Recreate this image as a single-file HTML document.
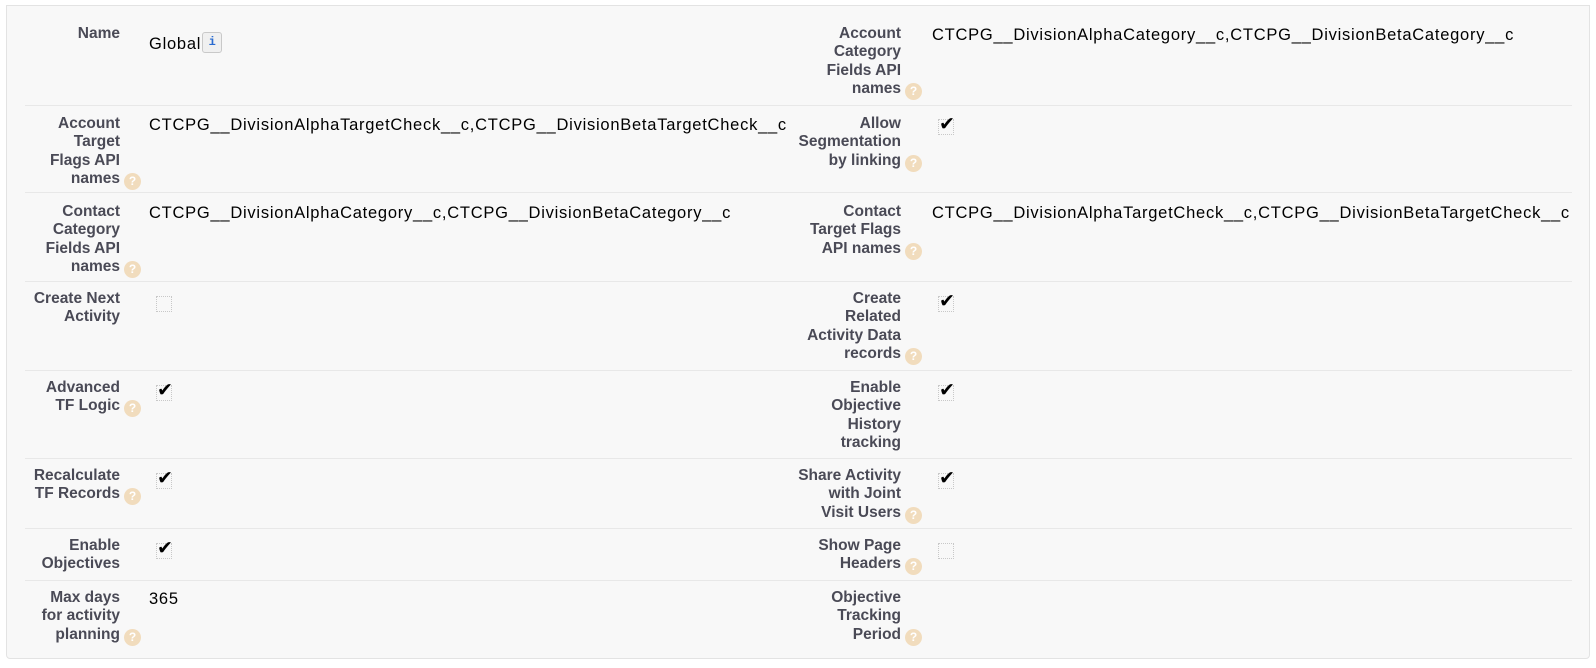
<!DOCTYPE html>
<html><head><meta charset="utf-8"><style>
html,body{margin:0;padding:0;background:#fff;width:1596px;height:668px;overflow:hidden;font-family:"Liberation Sans",Arial,sans-serif;}
.panel{position:absolute;left:6px;top:5px;width:1584px;height:654px;background:#f8f8f8;border:1px solid #e3e3e3;border-radius:0 0 4px 4px;box-sizing:border-box;}
.sep{position:absolute;left:25px;width:1547px;height:1px;background:#e8e8e8;}
.lab{position:absolute;font-weight:bold;font-size:15.5px;line-height:18.3px;color:#4a4a56;text-align:right;}
.l{right:1476px;width:90px;}
.r{right:695px;width:107px;}
.val{position:absolute;font-size:16.5px;line-height:18.3px;color:#000;white-space:nowrap;letter-spacing:0.75px;}
.vl{left:149px}.vr{left:932px}
.h{display:inline-block;width:17px;height:17px;border-radius:50%;background:#f1dcbd;color:#fff;font-size:12px;line-height:17px;text-align:center;vertical-align:-2px;margin-left:4px;margin-right:-21px;font-weight:bold;}
.cb{position:absolute;width:16px;height:16px;border:1px dotted #c8c8c8;box-sizing:border-box;}
.cb.x:after{content:"\2714";position:absolute;left:0px;top:-7px;font-size:19px;color:#000;font-family:"DejaVu Sans",sans-serif;}
.info{display:inline-block;width:20px;height:21px;border:1px solid #c9c9c9;border-radius:3px;background:#f0f0f0;color:#2a6bd0;font-size:12px;line-height:19px;text-align:center;font-family:"Liberation Mono",monospace;font-weight:bold;vertical-align:4px;box-sizing:border-box;letter-spacing:0;margin-left:1px;}
</style></head><body>
<div class="panel"></div>
<div class="sep" style="top:105px"></div>
<div class="sep" style="top:192px"></div>
<div class="sep" style="top:281px"></div>
<div class="sep" style="top:370px"></div>
<div class="sep" style="top:458px"></div>
<div class="sep" style="top:528px"></div>
<div class="sep" style="top:580px"></div>

<div class="lab l" style="top:25px">Name</div>
<div class="val vl" style="top:32px">Global<span class="info">i</span></div>
<div class="lab r" style="top:25px">Account Category Fields API names<span class="h">?</span></div>
<div class="val vr" style="top:26px">CTCPG__DivisionAlphaCategory__c,CTCPG__DivisionBetaCategory__c</div>

<div class="lab l" style="top:115px">Account Target Flags API names<span class="h">?</span></div>
<div class="val vl" style="top:116px">CTCPG__DivisionAlphaTargetCheck__c,CTCPG__DivisionBetaTargetCheck__c</div>
<div class="lab r" style="top:115px">Allow Segmentation by linking<span class="h">?</span></div>
<div class="cb x" style="left:938px;top:119px"></div>

<div class="lab l" style="top:203px">Contact Category Fields API names<span class="h">?</span></div>
<div class="val vl" style="top:204px">CTCPG__DivisionAlphaCategory__c,CTCPG__DivisionBetaCategory__c</div>
<div class="lab r" style="top:203px">Contact Target Flags API names<span class="h">?</span></div>
<div class="val vr" style="top:204px">CTCPG__DivisionAlphaTargetCheck__c,CTCPG__DivisionBetaTargetCheck__c</div>

<div class="lab l" style="top:290px">Create Next Activity</div>
<div class="cb" style="left:156px;top:296px"></div>
<div class="lab r" style="top:290px">Create Related Activity Data records<span class="h">?</span></div>
<div class="cb x" style="left:938px;top:296px"></div>

<div class="lab l" style="top:379px">Advanced TF Logic<span class="h">?</span></div>
<div class="cb x" style="left:156px;top:385px"></div>
<div class="lab r" style="top:379px">Enable Objective History tracking</div>
<div class="cb x" style="left:938px;top:385px"></div>

<div class="lab l" style="top:467px">Recalculate TF Records<span class="h">?</span></div>
<div class="cb x" style="left:156px;top:473px"></div>
<div class="lab r" style="top:467px">Share Activity with Joint Visit Users<span class="h">?</span></div>
<div class="cb x" style="left:938px;top:473px"></div>

<div class="lab l" style="top:537px">Enable Objectives</div>
<div class="cb x" style="left:156px;top:543px"></div>
<div class="lab r" style="top:537px">Show Page Headers<span class="h">?</span></div>
<div class="cb" style="left:938px;top:543px"></div>

<div class="lab l" style="top:589px">Max days for activity planning<span class="h">?</span></div>
<div class="val vl" style="top:590px">365</div>
<div class="lab r" style="top:589px">Objective Tracking Period<span class="h">?</span></div>
</body></html>
